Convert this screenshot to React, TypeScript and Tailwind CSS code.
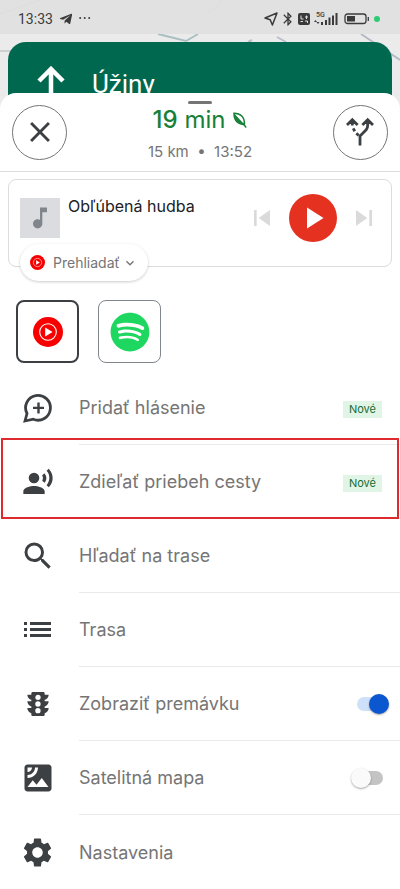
import { useState, type ReactNode } from "react";
import {
  MdBluetooth,
  MdClose,
  MdKeyboardArrowDown,
  MdMusicNote,
  MdPlayArrow,
  MdRecordVoiceOver,
  MdSatellite,
  MdSearch,
  MdSettings,
  MdSkipNext,
  MdSkipPrevious,
  MdTraffic,
} from "react-icons/md";
import { FaSpotify, FaTelegramPlane } from "react-icons/fa";

function MapBackdrop() {
  return (
    <svg
      className="absolute inset-0 h-full w-full"
      viewBox="0 0 400 110"
      preserveAspectRatio="xMidYMin slice"
      fill="none"
      aria-hidden="true"
    >
      <path d="M0 51H12M0 14L40 0" stroke="#c3c7ca" strokeWidth="1.5" />
      <path d="M158 34L186 41L198 34" stroke="#a9bfc1" strokeWidth="2" />
      <path d="M277 37L286 42M248 42L252 40" stroke="#b9bfc9" strokeWidth="2" />
      <path d="M361 34L400 60" stroke="#b3b9c6" strokeWidth="2" />
      <path d="M208 12L216 8L222 0" stroke="#d3d3d3" strokeWidth="2" />
      <path d="M386 102L400 96" stroke="#c3c7ca" strokeWidth="2" />
    </svg>
  );
}

function StatusBar() {
  return (
    <div className="relative flex h-[34px] items-center justify-between bg-[#e0e0e0]/90 pt-1 pr-5 pl-[18px] text-[#3b3b3b]">
      <div className="flex items-center gap-1.5">
        <span className="font-[Roboto,sans-serif] text-[14px] leading-4">13:33</span>
        <FaTelegramPlane className="size-3.5" />
        <svg className="h-3 w-3" viewBox="0 0 12 12" fill="currentColor" aria-hidden="true">
          <circle cx="1.2" cy="5" r="1" />
          <circle cx="5.7" cy="5" r="1" />
          <circle cx="10.2" cy="5" r="1" />
        </svg>
      </div>
      <div className="flex items-center gap-0.5">
        <svg className="size-3.5" viewBox="0 0 14 14" fill="none" stroke="currentColor" strokeWidth="1.5" strokeLinejoin="round" aria-hidden="true">
          <path d="M13 1L8.4 13L6.2 7.8L1 6Z" />
        </svg>
        <MdBluetooth className="size-4" />
        <svg className="h-3 w-3" viewBox="0 0 12 12" aria-hidden="true">
          <rect width="12" height="12" rx="2" fill="currentColor" />
          <path d="M3 2.5V6H5.5M8.5 2.5V6M7 4H10M2.5 8.5H5M7 8H9.5V10" stroke="#e0e0e0" fill="none" />
        </svg>
        <div className="relative ml-0.5 h-3 w-6">
          <span className="absolute -top-px left-0.5 font-[Roboto,sans-serif] text-[7px] leading-[7px] font-medium">5G</span>
          <svg className="h-3 w-6" viewBox="0 0 24 12" fill="currentColor" aria-hidden="true">
            <path d="M1.5 7L3 9H0ZM4 11L2.5 9H5.5Z" />
            <rect x="7" y="9" width="2" height="3" />
            <rect x="11" y="7" width="2" height="5" />
            <rect x="14.5" y="4.5" width="2" height="7.5" />
            <rect x="18" y="2.5" width="2" height="9.5" />
            <rect x="21.5" y="0" width="2" height="12" />
          </svg>
        </div>
        <svg className="ml-1 h-3 w-[26px]" viewBox="0 0 26 12" fill="none" aria-hidden="true">
          <rect x="1" y="1" width="21" height="9.5" rx="2.5" stroke="currentColor" strokeWidth="1.3" />
          <rect x="3" y="3" width="8" height="5.5" fill="currentColor" />
          <path d="M24.3 4V8" stroke="currentColor" strokeWidth="1.3" />
        </svg>
        <span className="ml-0.5 size-1.5 rounded-full bg-[#2ccb73]" />
      </div>
    </div>
  );
}

function YoutubeMusicLogo({ className }: { className: string }) {
  return (
    <svg className={className} viewBox="0 0 30 30" aria-hidden="true">
      <circle cx="15" cy="15" r="15" fill="#f70000" />
      <circle cx="15" cy="15" r="8.3" fill="none" stroke="#fff" strokeWidth="1.1" />
      <path d="M12.2 10.6L19.6 15L12.2 19.4Z" fill="#fff" />
    </svg>
  );
}

function LeafIcon() {
  return (
    <svg className="h-4 w-3.5" viewBox="0 0 14 16" aria-hidden="true">
      <path
        d="M1 1.2C7.5 1.4 11.8 4.6 11.4 12.4C5 12.2 1 8.4 1 1.2Z"
        fill="none"
        stroke="#188038"
        strokeWidth="1.5"
      />
      <path d="M1.2 1.4C1.4 8.2 5 12 11.2 12.2Z" fill="#188038" />
      <path d="M9.5 11L13.2 15.4" stroke="#188038" strokeWidth="1.5" />
    </svg>
  );
}

function ForkIcon() {
  return (
    <svg className="h-[30px] w-7" viewBox="0 0 28 30" fill="none" stroke="#3c4043" strokeWidth="2.8" aria-hidden="true">
      <path d="M14 28.5V19L20.2 12.8Q21.7 11 21.7 8V3" />
      <path d="M16.4 8L21.7 2.7L27 8" />
      <path d="M1 8L6.3 2.7L11.6 8M6.3 3V8.5M7.2 11.4L8.8 14.2M10.4 16.2L12.6 18.4" />
      <path d="M6.3 2L10 7H2.6ZM21.7 2L25.4 7H18Z" fill="#3c4043" stroke="none" />
    </svg>
  );
}

function ReportIcon() {
  return (
    <svg className="h-[31px] w-[30px]" viewBox="0 0 30 31" fill="none" stroke="#3c4043" strokeWidth="2.8" aria-hidden="true">
      <path d="M2 28L4 20.5A12.4 12.4 0 1 1 10.2 26.2Z" />
      <path d="M15.5 9.4V20.4M10 14.9H21" strokeWidth="2.4" />
    </svg>
  );
}

function ListIcon() {
  return (
    <svg className="h-4 w-[27px]" viewBox="0 0 27 16" fill="#3c4043" aria-hidden="true">
      <path d="M0 0H3V3H0ZM6 0H27V3H6ZM0 6H3V9H0ZM6 6H27V9H6ZM0 12H3V15H0ZM6 12H27V15H6Z" />
    </svg>
  );
}

function RoundButton({ label, children }: { label: string; children: ReactNode }) {
  return (
    <button
      type="button"
      aria-label={label}
      className="flex size-[55px] items-center justify-center rounded-full border border-[#757575] text-[#3c4043]"
    >
      {children}
    </button>
  );
}

function TripHeader() {
  return (
    <header className="relative flex h-[79px] items-center justify-between border-b border-[#dadce0] px-3">
      <span className="absolute top-2 left-1/2 h-[3px] w-6 -translate-x-1/2 rounded-full bg-[#757575]" />
      <RoundButton label="Zavrieť">
        <MdClose className="size-[34px]" />
      </RoundButton>
      <div className="flex flex-col items-center gap-1 pt-1">
        <h1 className="flex items-center gap-2 text-[24px] leading-8 text-[#188038]">
          <span>
            <span className="font-medium">19</span> min
          </span>
          <LeafIcon />
        </h1>
        <p className="text-[15px] leading-6 text-[#757575]">15 km&nbsp; •&nbsp; 13:52</p>
      </div>
      <RoundButton label="Alternatívne trasy">
        <ForkIcon />
      </RoundButton>
    </header>
  );
}

function MediaCard() {
  return (
    <section className="mx-2 mt-[7px] h-[88px] rounded-lg border border-[#dadce0] px-[11px] pt-[18px]">
      <div className="flex h-10">
        <div className="flex size-10 items-center justify-center bg-[#dadce0] text-[#80868b]">
          <MdMusicNote className="size-7" />
        </div>
        <h2 className="ml-2 text-[16px] leading-4 text-[#202124]">Obľúbená hudba</h2>
        <div className="ml-auto flex items-center gap-[11px] text-[#dadada]">
          <button type="button" aria-label="Predchádzajúca">
            <MdSkipPrevious className="size-8" />
          </button>
          <button
            type="button"
            aria-label="Prehrať"
            className="flex size-12 items-center justify-center rounded-full bg-[#e53120] text-white"
          >
            <MdPlayArrow className="size-9" />
          </button>
          <button type="button" aria-label="Nasledujúca">
            <MdSkipNext className="size-8" />
          </button>
        </div>
      </div>
      <button
        type="button"
        className="mt-1.5 flex h-[37px] items-center rounded-full bg-white px-2.5 text-[14px] text-[#757575] shadow-[0_1px_3px_rgba(0,0,0,0.2)]"
      >
        <YoutubeMusicLogo className="mr-2 size-[15px]" />
        Prehliadať
        <MdKeyboardArrowDown className="ml-0.5 size-4" />
      </button>
    </section>
  );
}

function MediaApps() {
  return (
    <div className="flex gap-[19px] px-4 pt-[33px]">
      <button
        type="button"
        aria-label="YouTube Music"
        className="flex size-[63px] items-center justify-center rounded-lg border-2 border-[#3c4043]"
      >
        <YoutubeMusicLogo className="size-[30px]" />
      </button>
      <button
        type="button"
        aria-label="Spotify"
        className="flex size-[63px] items-center justify-center rounded-lg border border-[#80868b]"
      >
        <FaSpotify className="size-10 text-[#1ed760]" />
      </button>
    </div>
  );
}

interface RowProps {
  icon: ReactNode;
  label: string;
  isNew?: boolean;
  highlighted?: boolean;
}

const ROW_CLASS = "group flex h-[74px] w-full items-center text-left text-[18px] text-[#757575]";

function MenuRow({ icon, label, isNew, highlighted }: RowProps) {
  return (
    <li className="group/row relative">
      <button type="button" className={ROW_CLASS}>
        <span className="flex w-[75px] shrink-0 justify-center text-[#3c4043]">{icon}</span>
        <span className="ml-1 flex h-full flex-1 items-center justify-between border-b border-[#e8e9eb] pr-[18px] group-last/row:border-b-0">
          {label}
          {isNew && (
            <span className="mt-1 bg-[#e1f5e7] px-1.5 text-[11px] leading-[17px] text-[#176b31]">
              Nové
            </span>
          )}
        </span>
      </button>
      {highlighted && (
        <span className="pointer-events-none absolute inset-x-px -top-[7px] bottom-0 border-2 border-[#dc2a2e]" />
      )}
    </li>
  );
}

function ToggleRow({ icon, label, initial }: { icon: ReactNode; label: string; initial: boolean }) {
  const [on, setOn] = useState(initial);

  return (
    <li>
      <label className={ROW_CLASS}>
        <span className="flex w-[75px] shrink-0 justify-center text-[#3c4043]">{icon}</span>
        <span className="ml-1 flex h-full flex-1 items-center justify-between border-b border-[#e8e9eb] pr-[11px]">
          {label}
          <span className="flex w-[39px] justify-center">
            <input
              type="checkbox"
              role="switch"
              checked={on}
              onChange={(event) => setOn(event.target.checked)}
              className="flex h-3.5 w-[26px] appearance-none items-center rounded-full bg-[#c4c4c4] before:size-5 before:shrink-0 before:-translate-x-1.5 before:rounded-full before:bg-[#fafafa] before:shadow-[0_1px_2px_rgba(0,0,0,0.35)] checked:bg-[#cfe0fa] checked:before:translate-x-3 checked:before:bg-[#0b57d0]"
            />
          </span>
        </span>
      </label>
    </li>
  );
}

export default function App() {
  return (
    <main className="relative min-h-screen overflow-hidden bg-[#ebebeb] font-[Inter,sans-serif]">
      <div className="relative h-[93px]">
        <MapBackdrop />
        <StatusBar />
        <div className="relative mx-2 mt-2 flex h-[70px] items-start rounded-t-[18px] bg-[#00684f] pt-6 pl-7 text-white">
          <svg className="size-8" viewBox="0 0 32 32" fill="none" stroke="currentColor" strokeWidth="4.5" aria-hidden="true">
            <path d="M15 32V4M3 15L15 3L27 15" />
          </svg>
          <p className="ml-6 font-[Roboto,sans-serif] text-[26px] leading-9">Úžiny</p>
        </div>
      </div>
      <div className="relative rounded-t-[16px] bg-white">
        <TripHeader />
        <MediaCard />
        <MediaApps />
        <ul className="mt-2">
          <MenuRow icon={<ReportIcon />} label="Pridať hlásenie" isNew />
          <MenuRow icon={<MdRecordVoiceOver className="size-8" />} label="Zdieľať priebeh cesty" isNew highlighted />
          <MenuRow icon={<MdSearch className="size-9" />} label="Hľadať na trase" />
          <MenuRow icon={<ListIcon />} label="Trasa" />
          <ToggleRow icon={<MdTraffic className="size-8" />} label="Zobraziť premávku" initial />
          <ToggleRow icon={<MdSatellite className="size-9" />} label="Satelitná mapa" initial={false} />
          <MenuRow icon={<MdSettings className="size-[35px]" />} label="Nastavenia" />
        </ul>
      </div>
    </main>
  );
}
